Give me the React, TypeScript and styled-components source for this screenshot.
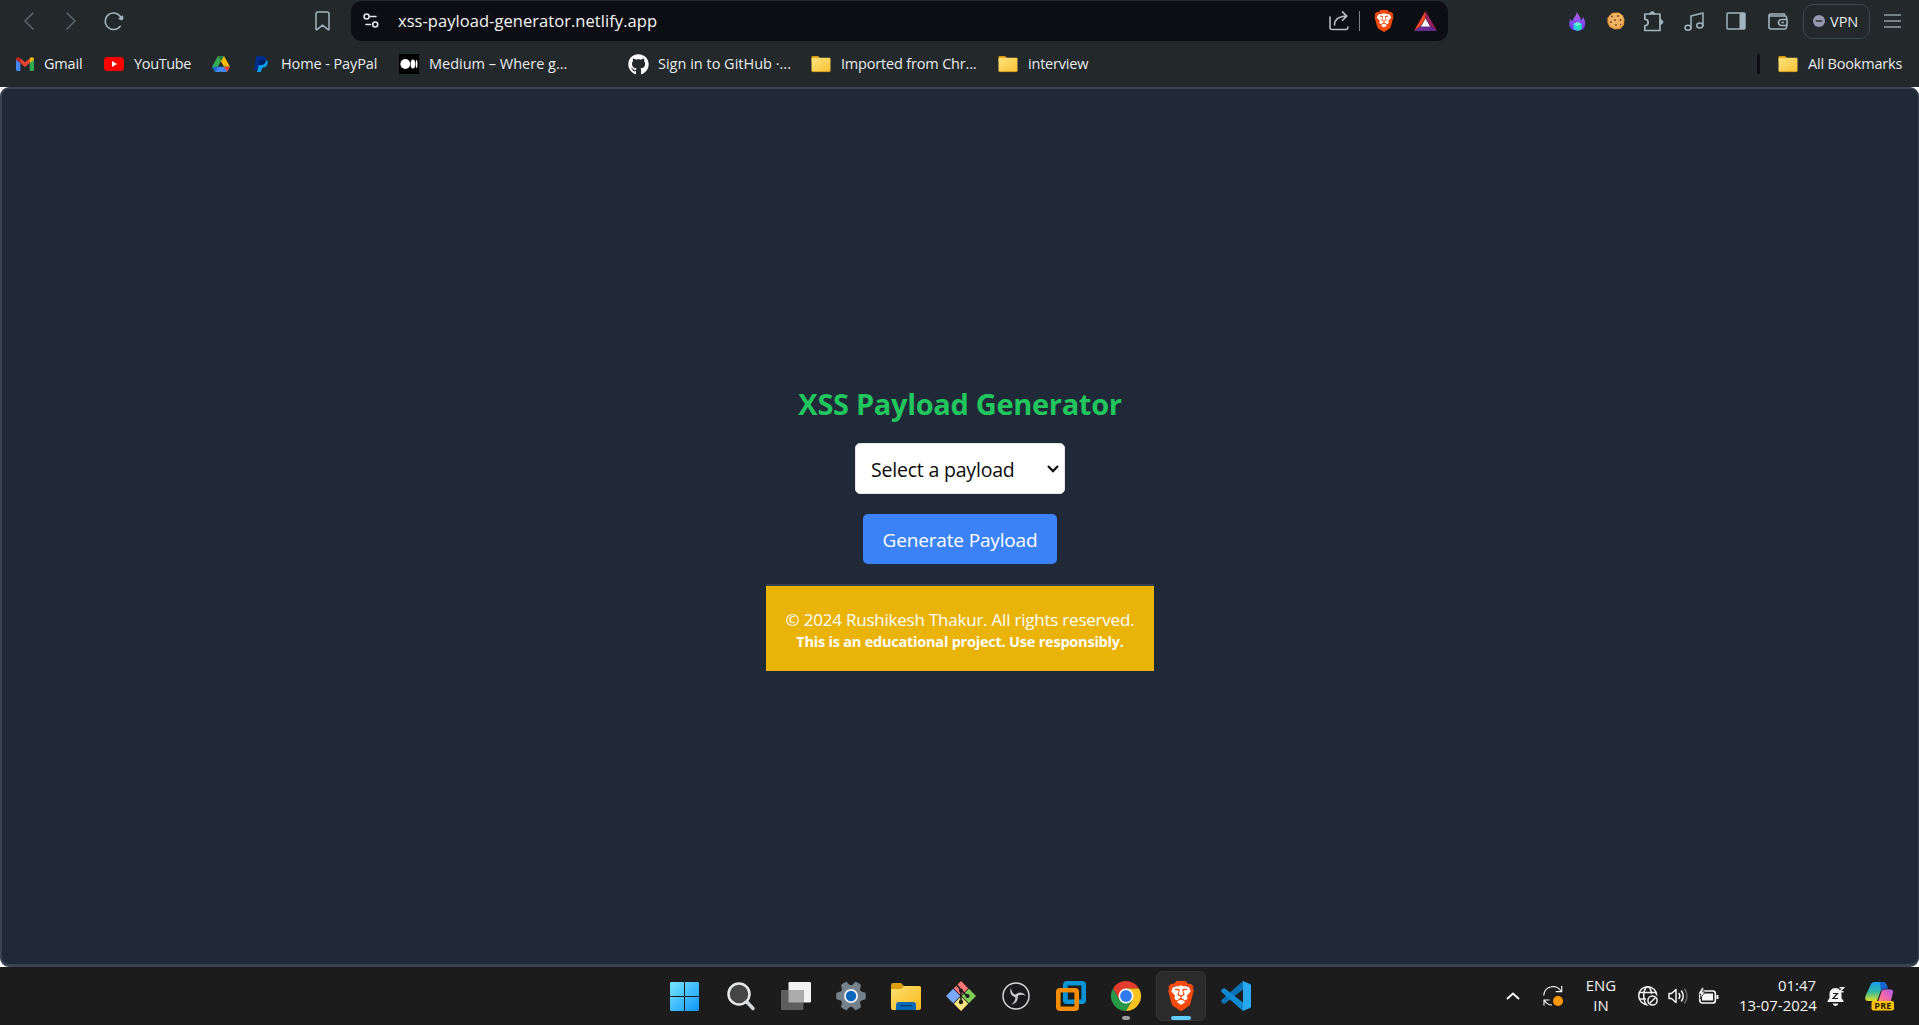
import React from "react";
import styled, { createGlobalStyle, css } from "styled-components";
import { SiBrave } from "react-icons/si";
import { FaGithub } from "react-icons/fa";

const GlobalStyle = createGlobalStyle`
  *, *::before, *::after { box-sizing: border-box; }
  body {
    margin: 0;
    overflow: hidden;
    background: #1c1c1c;
    font-family: "Open Sans", "Noto Sans", sans-serif;
  }
  svg { display: block; flex: none; overflow: visible; }
`;

const Screen = styled.div`
  width: 1919px;
  height: 1025px;
  display: flex;
  flex-direction: column;
`;

/* ---------- browser chrome ---------- */

const BrowserHeader = styled.header`
  height: 87px;
  flex: none;
  background: #23282b;
  color: #e9ecee;
`;

const Toolbar = styled.div`
  height: 42px;
  display: flex;
  align-items: center;
  color: #a3b3bd;
`;

const NavButtons = styled.div`
  width: 315px;
  display: flex;
  align-items: center;
  padding-left: 19px;
  gap: 23.5px;
`;

const NavButton = styled.span<{ $disabled?: boolean }>`
  width: 19px;
  display: flex;
  justify-content: center;
  color: ${(p) => (p.$disabled ? "#5c676d" : "#a3b3bd")};
`;

const AddressBar = styled.div`
  width: 1097px;
  height: 40px;
  margin-left: 21px;
  padding: 0 11px 0 12px;
  display: flex;
  align-items: center;
  border-radius: 11px;
  background: #0d0e13;
  color: #e4e7ea;
`;

const Url = styled.span`
  flex: 1;
  margin-left: 19px;
  font-size: 16.5px;
  line-height: 24px;
  letter-spacing: 0.05px;
  color: #f5f6f7;
  white-space: nowrap;
`;

const AddressDivider = styled.span`
  width: 1px;
  height: 20px;
  margin: 0 13px 0 10px;
  background: #7f8286;
`;

const BatSlot = styled.span`
  margin-left: 19px;
`;

const Extensions = styled.div`
  flex: 1;
  display: flex;
  align-items: center;
  padding-left: 121px;
`;

const Extension = styled.span<{ $gap: number }>`
  margin-left: ${(p) => p.$gap}px;
`;

const VpnButton = styled.div`
  width: 67px;
  height: 35px;
  margin: 0 14px 0 15px;
  padding-left: 9px;
  display: flex;
  align-items: center;
  gap: 5px;
  border: 1px solid #3c494c;
  border-radius: 10px;
  color: #e6e9ea;
  font-size: 14.5px;
`;

const BookmarksBar = styled.div`
  height: 44px;
  display: flex;
  align-items: center;
  padding-left: 15px;
`;

const Bookmark = styled.span<{ $width: number; $gap?: number }>`
  width: ${(p) => p.$width}px;
  display: flex;
  align-items: center;
  gap: ${(p) => p.$gap ?? 10}px;
`;

const BookmarkLabel = styled.span<{ $spacing?: number }>`
  padding-bottom: 1px;
  font-size: 14.5px;
  line-height: 20px;
  letter-spacing: ${(p) => p.$spacing ?? 0}px;
  white-space: nowrap;
`;

const BookmarksDivider = styled.span`
  width: 3px;
  height: 20px;
  margin: 0 18px 0 auto;
  border-radius: 2px;
  background: #0d0e13;
`;

/* ---------- page ---------- */

const Viewport = styled.main`
  height: 880px;
  flex: none;
  background: #fff;
`;

const Page = styled.div`
  height: 100%;
  display: flex;
  flex-direction: column;
  align-items: center;
  border: solid #3b4251;
  border-width: 2px 1px 3px 2px;
  border-radius: 9px;
  background: #1f2937;
  color: #fff;
`;

const Title = styled.h1`
  margin: 295px 0 19px;
  font-size: 29px;
  line-height: 40px;
  font-weight: 700;
  letter-spacing: -0.32px;
  color: #22c55e;
`;

const PayloadSelect = styled.div`
  width: 210px;
  height: 51px;
  padding: 2px 5px 0 15px;
  display: flex;
  align-items: center;
  justify-content: space-between;
  border: 1px solid #e5e7eb;
  border-radius: 5px;
  background: #fff;
  color: #0b0b0b;
  font-size: 19.5px;
  letter-spacing: -0.2px;
  svg { margin-bottom: 1px; }
`;

const GenerateButton = styled.button`
  width: 194px;
  height: 50px;
  margin: 20px 0;
  padding: 2px 0 0;
  border: 0;
  border-radius: 5px;
  background: #3b82f6;
  color: #fff;
  font-family: inherit;
  font-size: 19px;
  letter-spacing: -0.15px;
`;

const Notice = styled.footer`
  width: 388px;
  height: 87px;
  padding-top: 21px;
  border-top: 2px solid #374151;
  background: #eab308;
  text-align: center;
  white-space: nowrap;
`;

const Copyright = styled.p`
  margin: 0;
  font-size: 17px;
  line-height: 25px;
  letter-spacing: -0.22px;
`;

const Disclaimer = styled.p`
  margin: 0;
  font-size: 14.5px;
  line-height: 20px;
  font-weight: 700;
  letter-spacing: -0.22px;
`;

/* ---------- taskbar ---------- */

const Taskbar = styled.div`
  height: 58px;
  flex: none;
  display: flex;
  align-items: center;
  justify-content: space-between;
  padding: 0 24px 0 661px;
  background: #1c1c1c;
  color: #f4f4f4;
`;

const AppList = styled.div`
  display: flex;
  gap: 5px;
`;

const AppTile = styled.div<{ $state?: "active" | "running" | "start" }>`
  position: relative;
  width: 50px;
  height: 50px;
  padding-right: ${(p) => (p.$state === "start" ? 3 : 0)}px;
  display: flex;
  align-items: center;
  justify-content: center;
  border-radius: 6px;
  border: 1px solid transparent;
  ${(p) => p.$state === "active" && css`
    background: #2b2b2b;
    border-color: #333;
  `}
  ${(p) => (p.$state === "active" || p.$state === "running") && css`
    &::after {
      content: "";
      position: absolute;
      bottom: 0;
      left: 50%;
      width: ${p.$state === "active" ? 20 : 8}px;
      height: 4px;
      border-radius: 2px;
      transform: translateX(-50%);
      background: ${p.$state === "active" ? "#60cdff" : "#9a9a9a"};
    }
  `}
`;

const Tray = styled.div`
  display: flex;
  align-items: center;
`;

const TrayText = styled.div<{ $align: "center" | "right"; $width: number }>`
  width: ${(p) => p.$width}px;
  padding-bottom: 1px;
  font-size: 14.9px;
  line-height: 19.5px;
  text-align: ${(p) => p.$align};
  white-space: nowrap;
`;

const TrayGroup = styled.div`
  display: flex;
  align-items: center;
  gap: 10px;
  margin: 0 20px 0 17px;
`;

const TrayIcon = styled.span<{ $before?: number; $after?: number }>`
  margin-left: ${(p) => p.$before ?? 0}px;
  margin-right: ${(p) => p.$after ?? 0}px;
`;

/* ---------- icons ---------- */

const line = { fill: "none", stroke: "currentColor", strokeWidth: 1.5, strokeLinecap: "round", strokeLinejoin: "round" } as const;

const Chevron = ({ flip }: { flip?: boolean }) => (
  <svg width="10" height="18" viewBox="0 0 10 18" {...line}><path d={flip ? "M1 1l8 8-8 8" : "M9 1L1 9l8 8"} /></svg>
);

const Reload = () => (
  <svg width="20" height="20" viewBox="0 0 20 20" {...line}>
    <path d="M16.200 15.200A8.300 8.300 0 1 1 17 6.500" />
    <path d="M14.200 7.600L18.600 4.200Q20.300 7 18.300 9.300Q15.800 9.700 14.200 7.600z" fill="currentColor" stroke="none" />
  </svg>
);

const BookmarkIcon = () => (
  <svg width="15" height="20" viewBox="0 0 15 20" {...line}><path d="M3 1h9q2 0 2 2v15.300q0 1-1 .3L7.500 14.200 2 18.600q-1 .7-1-.3V3q0-2 2-2z" /></svg>
);

const Sliders = () => (
  <svg width="16" height="16" viewBox="0 0 16 16" {...line} strokeWidth="1.600">
    <circle cx="3.600" cy="3.500" r="2.500" /><path d="M7.500 3.500H13M3 11.500h4.500" /><circle cx="12.200" cy="11.500" r="2.500" />
  </svg>
);

const Share = () => (
  <svg width="20" height="20" viewBox="0 0 20 20" {...line} strokeWidth="1.600" stroke="#b9bbbe">
    <path d="M1 6v10.500q0 2 2 2h14q1.800 0 1.800-2V16" /><path d="M5.500 14C5.500 9 8.500 5.500 17.500 5M13.500 .9l4.300 4.200-4.300 4.200" />
  </svg>
);

const BraveLion = ({ size }: { size: number }) => (
  <svg width={size} height={size} viewBox="0 0 24 24">
    <path d="M5 5l7-2 7 2 1 4-3 9-5 4-5-4-3-9z" fill="#fff" />
    <SiBrave size={24} color="#fb4a0c" />
  </svg>
);

const Bat = () => (
  <svg width="23" height="20" viewBox="0 0 23 20">
    <path d="M11.500 0v7L7 14.500 0 20z" fill="#ff4724" /><path d="M11.500 0L23 20l-7-5.500L11.500 7z" fill="#9e1f63" />
    <path d="M0 20l7-5.500h9l7 5.500z" fill="#662d91" /><path d="M11.500 7.500l4.500 8H7z" fill="#fff" />
  </svg>
);

const Flame = () => (
  <svg width="17" height="20" viewBox="0 0 17 20">
    <defs><linearGradient id="flame" x1="0" y1="0" x2="0" y2="1"><stop stopColor="#c069f7" /><stop offset="1" stopColor="#5a35f2" /></linearGradient></defs>
    <path d="M7.800 0C8 3 11.500 5 12 9.500c1.200-.7 1.800-2 1.800-3.700C16 9 16.500 12 16 14.500c-.7 3.500-3.600 5.300-7.500 5.300-4 0-7-1.800-7.900-5C0 12.500.5 9.500 1.600 7.500c.3 1.500 1 2.500 2.200 2.900C3.500 6.500 8.500 5 7.800 0z" fill="url(#flame)" />
    <path d="M8.500 11l4 2v5l-4 2-4-2v-5z" fill="#25cde5" /><path d="M8.500 11l4 2-4 2-4-2z" fill="#6df5c6" /><path d="M8.500 15l4-2v5l-4 2z" fill="#25e0a8" />
  </svg>
);

const Cookie = () => (
  <svg width="18" height="18" viewBox="0 0 18 18">
    <path d="M5 .8L12 .5l4 3 1.500 4L17 13l-3.500 4-6 .5-5-2.500L.5 11 .3 6z" fill="#dc913b" />
    <circle cx="9" cy="8.500" r="7.600" fill="#efb463" />
    <g fill="#7b4720"><circle cx="5" cy="4.500" r=".9" /><circle cx="11" cy="4" r="1" /><circle cx="8" cy="8" r=".9" /><circle cx="13.500" cy="8" r="1" /><circle cx="4" cy="10" r="1" /><circle cx="9" cy="13" r="1" /><circle cx="13.500" cy="12.500" r=".7" /></g>
  </svg>
);

const Puzzle = () => (
  <svg width="21" height="21" viewBox="0 0 21 21" {...line} strokeWidth="1.700">
    <path d="M7 3H1.800v5.200c4.500.6 4.500 6 0 6.600V19.500H17V3h-6" />
    <path d="M6.500 3c.5-3.300 5-3.300 5.500 0zM17 8.500c4 .2 4 4.800 0 5z" fill="currentColor" strokeWidth=".8" />
  </svg>
);

const MusicNotes = () => (
  <svg width="20" height="19" viewBox="0 0 20 19" {...line}>
    <path d="M7 15.500V4l12-3v12.500" /><ellipse cx="4" cy="15.700" rx="3" ry="2.500" /><ellipse cx="15.800" cy="13.500" rx="3" ry="2.500" />
  </svg>
);

const Sidebar = () => (
  <svg width="20" height="18" viewBox="0 0 20 18"><rect x="1" y="1" width="18" height="16" rx="1" fill="none" stroke="currentColor" strokeWidth="1.500" /><path d="M13.500 1H19v16h-5.500z" fill="currentColor" /></svg>
);

const Wallet = () => (
  <svg width="20" height="17" viewBox="0 0 20 17" {...line} strokeWidth="1.600">
    <path d="M18.500 6V4q0-1-1.200-1H1.500M16.500 3V1h-14Q1 1 1 2.500V14q0 2 2 2h13.500q2 0 2-2v-1.500" />
    <path d="M19 6.500h-5.500a3 3 0 0 0 0 6H19zM14 9.500h1.500" />
  </svg>
);

const Menu = () => (
  <svg width="17" height="14" viewBox="0 0 17 14"><path d="M0 1h17M0 7h17M0 13h17" stroke="#919da4" strokeWidth="1.300" /></svg>
);

const VpnDot = () => (
  <svg width="12" height="12" viewBox="0 0 12 12"><circle cx="6" cy="6" r="6" fill="#9698af" /><path d="M2.700 6h6.600" stroke="#23282b" strokeWidth="1.400" /></svg>
);

const Gmail = () => (
  <svg width="19" height="14" viewBox="-1 0 19 14">
    <path d="M0 2.500l4.300 3.300V14H1.500Q0 14 0 12.500z" fill="#4285f4" /><path d="M13.700 5.800L18 2.500v10q0 1.500-1.500 1.500h-2.800z" fill="#34a853" />
    <path d="M4.300 1.200l4.700 4 4.700-4v4.800L9 10 4.300 6z" fill="#ea4335" /><path d="M0 2.500C0 .2 2.200-.5 4.300 1.200V6L0 2.700z" fill="#c5221f" />
    <path d="M18 2.500c0-2.300-2.200-3-4.300-1.300V6L18 2.700z" fill="#fbbc04" />
  </svg>
);

const YouTube = () => (
  <svg width="20" height="14" viewBox="0 0 20 14"><rect width="20" height="14" rx="3.500" fill="#f00" /><path d="M8 4l5 3-5 3z" fill="#fff" /></svg>
);

const Drive = () => (
  <svg width="18" height="16" viewBox="0 0 18 16">
    <path d="M6 0l3 5.300L3 16 0 10.700z" fill="#34a853" /><path d="M6 0h6l6 10.700h-6z" fill="#fbbc04" />
    <path d="M5.900 10.700H18L15 16H3z" fill="#4285f4" /><path d="M0 10.700h6L3 16z" fill="#1967d2" />
    <path d="M12 10.700h6L15 16z" fill="#ea4335" /><path d="M6 0h6L9 5.300z" fill="#188038" />
  </svg>
);

const PayPal = () => (
  <svg width="14" height="16" viewBox="0 0 14 16">
    <path d="M5 4h7.500c1.500 1.300 1.500 3 .7 5-.9 2-2.700 2.700-5 2.700L7 16H3z" fill="#009fe8" />
    <path d="M2.400 0H8c3 0 4.500 1.400 4 4.400-.5 3-2.500 4.600-5.500 4.600H4.700L3.700 14H0z" fill="#002d8a" />
    <path d="M5.500 4H12c-.3 3.200-2.300 5-5.500 5H4.700z" fill="#001c64" />
  </svg>
);

const Medium = () => (
  <svg width="20" height="20" viewBox="0 0 20 20"><rect width="20" height="20" fill="#000" /><g fill="#fff"><circle cx="6.300" cy="10" r="4.900" /><ellipse cx="13.900" cy="10" rx="2.300" ry="4.600" /><ellipse cx="17.600" cy="10" rx=".9" ry="4.100" /></g></svg>
);

const Folder = () => (
  <svg width="20" height="16" viewBox="0 0 20 16">
    <defs><linearGradient id="folder" x1="0" y1="0" x2="1" y2="1"><stop stopColor="#ffe27a" /><stop offset="1" stopColor="#f7c137" /></linearGradient></defs>
    <path d="M.5 1q0-1 1-1H7l2 2h8v3H.5z" fill="#d99a0b" /><rect x=".5" y="1.800" width="19" height="14" rx="1.200" fill="url(#folder)" /><path d="M1 15.600h18" stroke="#d9a11b" strokeWidth=".8" />
  </svg>
);

const SelectArrow = () => (
  <svg width="12" height="8" viewBox="0 0 12 8" fill="none" stroke="#111" strokeWidth="2.300"><path d="M1 1l5 5 5-5" /></svg>
);

const Windows = () => (
  <svg width="29" height="29" viewBox="0 0 29 29">
    <defs><linearGradient id="win" gradientUnits="userSpaceOnUse" x1="0" y1="0" x2="29" y2="29"><stop stopColor="#77e7ff" /><stop offset="1" stopColor="#0f95fb" /></linearGradient></defs>
    <path d="M1 0h13v14H0V1zM15 0h13l1 1v13H15zM0 15h14v14H1l-1-1zM15 15h14v13l-1 1H15z" fill="url(#win)" />
  </svg>
);

const Search = () => (
  <svg width="28" height="30" viewBox="0 0 28 30"><path d="M19 20l7 7.500" stroke="#d2d4d8" strokeWidth="3.500" strokeLinecap="round" /><circle cx="12" cy="13" r="10.500" fill="#454545" stroke="#e7e8ea" strokeWidth="2.500" /></svg>
);

const TaskView = () => (
  <svg width="30" height="28" viewBox="0 0 30 28"><rect x="7.500" width="22.500" height="20.500" rx="1.300" fill="#f3f3f3" /><rect y="8" width="22.500" height="20" rx="1.300" fill="#5e5e5e" /><path d="M7.500 8h15v12.500h-15z" fill="#acacac" /></svg>
);

const Settings = () => (
  <svg width="30" height="30" viewBox="-15 -15 30 30">
    <g fill="#75818a">{[0, 60, 120, 180, 240, 300].map((a) => <path key={a} transform={`rotate(${a + 30})`} d="M-5-8.500l1.800-6q3.200-.8 6.400 0l1.800 6z" />)}<circle r="11" /></g>
    <circle r="7" fill="#eef2f5" /><circle r="5.200" fill="#0e66ba" />
  </svg>
);

const Explorer = () => (
  <svg width="30" height="27" viewBox="0 0 30 27">
    <defs><linearGradient id="explorer" x1="0" y1="0" x2="1" y2="1"><stop stopColor="#ffdf70" /><stop offset="1" stopColor="#f8b91c" /></linearGradient></defs>
    <path d="M0 2q0-2 2-2h8l3 3h15q2 0 2 2v4H0z" fill="#dc9d0c" /><path d="M0 6h10l3-3h15q2 0 2 2v20q0 2-2 2H2q-2 0-2-2z" fill="url(#explorer)" />
    <path d="M5 27v-5q0-3 3-3h14q3 0 3 3v5z" fill="#0869b8" /><path d="M9 22.700h12" stroke="#043f73" strokeWidth="1.300" />
  </svg>
);

const GitLogo = () => (
  <svg width="30" height="30" viewBox="0 0 30 30">
    <path d="M15 0l7.200 7.200-7.200 7.200-7.200-7.200z" fill="#ff7676" /><path d="M7.200 7.800l7.200 7.200-7.200 7.200L0 15z" fill="#78a9ff" /><path d="M22.800 7.800L30 15l-7.200 7.200-7.200-7.200z" fill="#80ce58" /><path d="M15 15.600l7.200 7.200L15 30l-7.200-7.200z" fill="#ffe680" />
    <path d="M10.500 3.500l4.500 5.500v12M15 9l6 6" stroke="#1c1c1c" strokeWidth="1.600" fill="none" /><g fill="#1c1c1c"><circle cx="15" cy="9.500" r="2" /><circle cx="15" cy="21" r="2.200" /><circle cx="21.500" cy="15" r="2.100" /></g>
  </svg>
);

const Obs = () => (
  <svg width="28" height="28" viewBox="-14 -14 28 28">
    <circle r="13" fill="#19191b" stroke="#d5d5d7" strokeWidth="1.500" />
    {[0, 120, 240].map((a) => (
      <path key={a} transform={`rotate(${a})`} d="M-1 0Q.5 5-5 8.800Q3 7 1.500 0z" fill="#c9c9cc" />
    ))}
    <circle r="1.600" fill="#c9c9cc" />
  </svg>
);

const VMware = () => (
  <svg width="30" height="30" viewBox="0 0 30 30" fill="none" strokeWidth="4.600">
    <rect x="9.300" y="2.300" width="18.400" height="18.400" rx="1.500" stroke="#0794d4" /><rect x="2.300" y="9.300" width="18.400" height="18.400" rx="1.500" stroke="#f58c00" /><path d="M9.300 11.600V18.400" stroke="#0794d4" />
  </svg>
);

const Chrome = () => (
  <svg width="30" height="30" viewBox="-15 -15 30 30">
    <path d="M-13-7.500A15 15 0 0 1 13-7.500H0L-6.500 3.700z" fill="#e33b2e" /><path d="M-13-7.500A15 15 0 0 0 0 15L6.500 3.750H-6.500z" fill="#279847" />
    <path d="M13-7.500A15 15 0 0 1 0 15L6.500 3.750 0-7.500z" fill="#fcc31e" /><circle r="7.500" fill="#fff" /><circle r="5.900" fill="#3079ee" />
  </svg>
);

const VSCode = () => (
  <svg width="30" height="30" viewBox="0 0 30 30">
    <path d="M22 0l8 3.500v23L22 30z" fill="#27a8f0" /><path d="M22 0v8.500L4 22.500q-1 .6-2 0L.4 21q-.8-1 0-2z" fill="#0873b9" />
    <path d="M22 30v-8.500L4 7.500q-1-.6-2 0L.4 9q-.8 1 0 2z" fill="#1189d0" />
  </svg>
);

const TrayChevron = () => <svg width="14" height="8" viewBox="0 0 14 8" fill="none" stroke="#f4f4f4" strokeWidth="2"><path d="M1 7l6-5.500L13 7" /></svg>;

const Sync = () => (
  <svg width="20" height="20" viewBox="0 0 20 20" fill="none" stroke="#f0f0f0" strokeWidth="1.200">
    <path d="M.7 9.500C1.500-1 15-2 18 5.500M18.700 0v5.700h-6M1 19.500V14h5.500M1.500 14.500C3.500 18 6 19 9 19" /><circle cx="15" cy="15" r="5" fill="#ff9800" stroke="none" />
  </svg>
);

const GlobeBlocked = () => (
  <svg width="20" height="20" viewBox="0 0 20 20" fill="none" stroke="#f2f2f2" strokeWidth="1.500">
    <circle cx="9.700" cy="9.700" r="9" /><ellipse cx="9.700" cy="9.700" rx="4" ry="9" /><path d="M1.500 6.500H18M1.500 13H12" />
    <circle cx="14.500" cy="14.500" r="5.900" fill="#1c1c1c" stroke="#1c1c1c" /><circle cx="14.500" cy="14.500" r="4.600" /><path d="M11.500 17.500l6-6" />
  </svg>
);

const Speaker = () => (
  <svg width="20" height="16" viewBox="0 0 20 16" {...line}>
    <path d="M1 5.500h2.500L8 1.500v13l-4.500-4H1zM11 5.500q1.800 2.500 0 5M13.500 3q3.500 5 0 10" /><path d="M16.500 1q5 7 0 14" stroke="#666" />
  </svg>
);

const Battery = () => (
  <svg width="21" height="16" viewBox="0 0 21 16">
    <rect x="1.800" y="3" width="15.500" height="12" rx="2.500" fill="none" stroke="#f5f5f5" strokeWidth="1.700" /><path d="M4 5.500h11v7H4zM18.500 7h2v4h-2z" fill="#f5f5f5" />
    <path d="M4-.5L0 6h3l-1 5 5-7H4.500L6-.5z" fill="#f5f5f5" stroke="#1c1c1c" strokeWidth=".7" />
  </svg>
);

const BellSnooze = () => (
  <svg width="18" height="19" viewBox="0 0 18 19">
    <path d="M8.500 1C4.500 1 2.500 4 2.500 7v4L.5 14v1h16v-1l-2-3V7C14.500 4 12 1 8.500 1zM5.500 16.500h6q-1 2.500-3 2.500t-3-2.500z" fill="#f4f4f4" />
    <path d="M6 6.500h4.500l-4.500 5h5" fill="none" stroke="#1c1c1c" strokeWidth="1.200" /><path d="M12-1h7v5.500h-6z" fill="#1c1c1c" /><path d="M12.500.7h4l-4 4h4" fill="none" stroke="#f4f4f4" strokeWidth="1.400" />
  </svg>
);

const Copilot = () => (
  <svg width="30" height="29" viewBox="0 0 30 29">
    <defs>
      <linearGradient id="cpA" x1="0" y1="0" x2="0" y2="1"><stop stopColor="#189cf0" /><stop offset=".5" stopColor="#32b9a5" /><stop offset="1" stopColor="#e2df22" /></linearGradient>
      <linearGradient id="cpB" x1="1" y1="0" x2="0" y2="1"><stop stopColor="#a95cf2" /><stop offset=".6" stopColor="#f269a5" /><stop offset="1" stopColor="#ff9066" /></linearGradient>
    </defs>
    <path d="M6 2q1-2 3.500-2H18q2.500 0 3.500 3l1.500 4h-4q-2.500 0-3.300 2.500L12 19H3.500Q-1 19 .5 14z" fill="url(#cpA)" />
    <path d="M15 0h3q2.500 0 3.500 3l1.500 4h-4q-2 0-3 2z" fill="#1563d5" />
    <path d="M19.500 7H25q4.500 0 3.200 4.500L26 20H12.500L16 9.500Q17 7 19.500 7z" fill="url(#cpB)" stroke="#1c1c1c" strokeWidth=".8" />
    <rect x="6.500" y="19" width="22.500" height="9.500" rx="2" fill="#ffc20a" />
    <text x="17.800" y="27" textAnchor="middle" fontSize="9" fontWeight="700" fill="#241c00" textLength="17">PRE</text>
  </svg>
);

/* ---------- app ---------- */

export default function App() {
  return (
    <Screen>
      <GlobalStyle />
      <BrowserHeader>
        <Toolbar>
          <NavButtons>
            <NavButton $disabled><Chevron /></NavButton>
            <NavButton $disabled><Chevron flip /></NavButton>
            <NavButton><Reload /></NavButton>
          </NavButtons>
          <BookmarkIcon />
          <AddressBar>
            <Sliders />
            <Url>xss-payload-generator.netlify.app</Url>
            <Share />
            <AddressDivider />
            <BraveLion size={22} />
            <BatSlot><Bat /></BatSlot>
          </AddressBar>
          <Extensions>
            <Extension $gap={0}><Flame /></Extension>
            <Extension $gap={21}><Cookie /></Extension>
            <Extension $gap={18}><Puzzle /></Extension>
            <Extension $gap={20}><MusicNotes /></Extension>
            <Extension $gap={22}><Sidebar /></Extension>
            <Extension $gap={22}><Wallet /></Extension>
            <VpnButton><VpnDot />VPN</VpnButton>
            <Menu />
          </Extensions>
        </Toolbar>
        <BookmarksBar>
          <Bookmark $width={89}><Gmail /><BookmarkLabel $spacing={-0.2}>Gmail</BookmarkLabel></Bookmark>
          <Bookmark $width={108}><YouTube /><BookmarkLabel $spacing={-0.35}>YouTube</BookmarkLabel></Bookmark>
          <Bookmark $width={42}><Drive /></Bookmark>
          <Bookmark $width={145} $gap={13}><PayPal /><BookmarkLabel $spacing={-0.1}>Home - PayPal</BookmarkLabel></Bookmark>
          <Bookmark $width={229}><Medium /><BookmarkLabel>Medium – Where g...</BookmarkLabel></Bookmark>
          <Bookmark $width={183} $gap={9}><FaGithub size={21} color="#fff" /><BookmarkLabel>Sign in to GitHub ·...</BookmarkLabel></Bookmark>
          <Bookmark $width={187}><Folder /><BookmarkLabel $spacing={-0.18}>Imported from Chr...</BookmarkLabel></Bookmark>
          <Bookmark $width={100}><Folder /><BookmarkLabel $spacing={-0.2}>interview</BookmarkLabel></Bookmark>
          <BookmarksDivider />
          <Bookmark $width={141}><Folder /><BookmarkLabel $spacing={-0.18}>All Bookmarks</BookmarkLabel></Bookmark>
        </BookmarksBar>
      </BrowserHeader>

      <Viewport>
        <Page>
          <Title>XSS Payload Generator</Title>
          <PayloadSelect>Select a payload<SelectArrow /></PayloadSelect>
          <GenerateButton>Generate Payload</GenerateButton>
          <Notice>
            <Copyright>© 2024 Rushikesh Thakur. All rights reserved.</Copyright>
            <Disclaimer>This is an educational project. Use responsibly.</Disclaimer>
          </Notice>
        </Page>
      </Viewport>

      <Taskbar>
        <AppList>
          <AppTile $state="start"><Windows /></AppTile>
          <AppTile><Search /></AppTile>
          <AppTile><TaskView /></AppTile>
          <AppTile><Settings /></AppTile>
          <AppTile><Explorer /></AppTile>
          <AppTile><GitLogo /></AppTile>
          <AppTile><Obs /></AppTile>
          <AppTile><VMware /></AppTile>
          <AppTile $state="running"><Chrome /></AppTile>
          <AppTile $state="active"><BraveLion size={30} /></AppTile>
          <AppTile><VSCode /></AppTile>
        </AppList>
        <Tray>
          <TrayIcon $after={23}><TrayChevron /></TrayIcon>
          <TrayIcon $after={18}><Sync /></TrayIcon>
          <TrayText $align="center" $width={40}>ENG<br />IN</TrayText>
          <TrayGroup><GlobeBlocked /><Speaker /><Battery /></TrayGroup>
          <TrayText $align="right" $width={77}>01:47<br />13-07-2024</TrayText>
          <TrayIcon $before={11} $after={20}><BellSnooze /></TrayIcon>
          <Copilot />
        </Tray>
      </Taskbar>
    </Screen>
  );
}
